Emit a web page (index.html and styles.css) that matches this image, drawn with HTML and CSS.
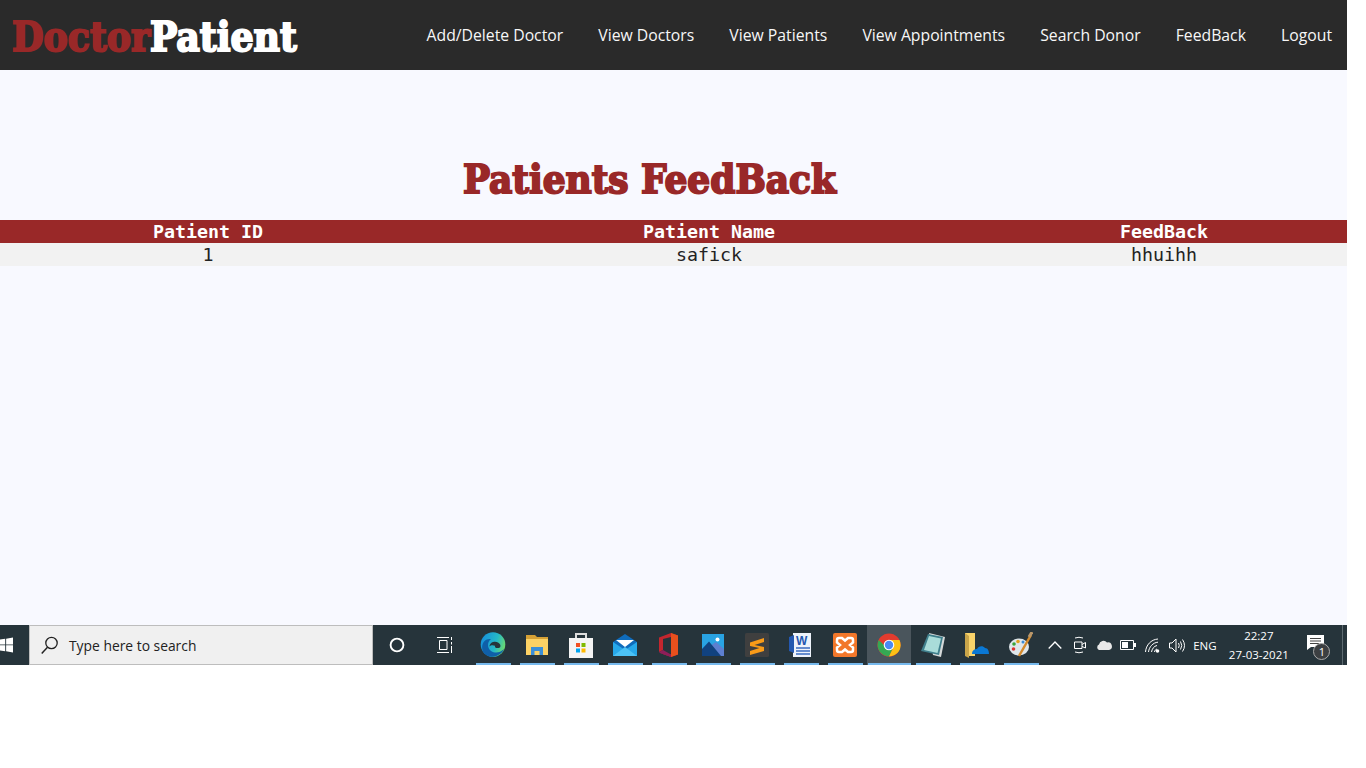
FILE: index.html
```html
<!DOCTYPE html>
<html lang="en">
<head>
<meta charset="utf-8">
<title>Patients FeedBack</title>
<link rel="stylesheet" href="styles.css">
</head>
<body>
<div class="screen">
  <header class="nav">
    <div class="logo"><span class="logo-a">Doctor</span><span class="logo-b">Patient</span></div>
    <nav class="links">
      <a>Add/Delete Doctor</a><a>View Doctors</a><a>View Patients</a><a>View Appointments</a><a>Search Donor</a><a>FeedBack</a><a>Logout</a>
    </nav>
  </header>
  <main class="main">
    <h1 class="title">Patients FeedBack</h1>
    <div class="row head"><div>Patient ID</div><div>Patient Name</div><div>FeedBack</div></div>
    <div class="row body-row"><div>1</div><div>safick</div><div>hhuihh</div></div>
  </main>
  <footer class="taskbar">
    <div class="start">
      <svg width="14" height="16" viewBox="0 0 14 16"><path fill="#fff" d="M0 2.2 5.6 1.4V7.4H0ZM6.6 1.2 14 0V7.4H6.6ZM0 8.4H5.6V14.6L0 13.8ZM6.6 8.4H14V16L6.6 14.8Z"/></svg>
    </div>
    <div class="search">
      <svg width="20" height="20" viewBox="0 0 20 20"><circle cx="11.5" cy="8" r="5.7" fill="none" stroke="#222" stroke-width="1.3"/><path d="M7.5 12.3 1.7 18.4" stroke="#222" stroke-width="1.5"/></svg>
      <span>Type here to search</span>
    </div>
    <div class="sys">
      <svg width="16" height="16" viewBox="0 0 16 16"><circle cx="8" cy="8" r="6.4" fill="none" stroke="#fff" stroke-width="1.9"/></svg>
    </div>
    <div class="sys sys-b">
      <svg width="18" height="16" viewBox="0 0 18 16"><path fill="none" stroke="#fff" d="M1 .5H13M1 15.5H13M3.5 3.5H11V12.5H3.5ZM15.5 0V3M15.5 5V7.5M15.5 9V16"/></svg>
    </div>
    <div class="apps">
      <div class="app on"><svg width="26" height="26" viewBox="0 0 26 26"><defs><linearGradient id="e1" x1="0" y1="0.3" x2="1" y2="0.6"><stop offset="0" stop-color="#1690dc"/><stop offset="0.6" stop-color="#25b8c8"/><stop offset="1" stop-color="#6fdc6a"/></linearGradient></defs><circle cx="13" cy="12.500" r="12.300" fill="url(#e1)"/><path fill="#0f5fa8" d="M3 20C0 12 5 6 11 7 7 10 7 16 11 19c4 2.500 9 2 13-2-3 8-16 11-21 3Z"/><path fill="#26343b" d="M9.500 14.500C10 10 15 9 18 10.500c3 1.500 3.500 5 .5 5.500-2.500.4-4-.5-3.500-2.300C13 12.800 10.500 13 9.500 14.500Z"/></svg></div>
      <div class="app on"><svg width="24" height="24" viewBox="0 0 24 24"><path fill="#d6a136" d="M1 2H10L12 4H23V8H1Z"/><path fill="#fcd265" d="M1 6H23V22H1Z"/><path fill="#3a8fd8" d="M6 14H18V22H14.500V18H9.500V22H6Z"/></svg></div>
      <div class="app"><svg width="24" height="26" viewBox="0 0 24 26"><path fill="none" stroke="#ddd" stroke-width="2" d="M7 6V2H17V6"/><path fill="#f4f4f4" d="M0 6H24V26H0Z"/><path fill="#f25022" d="M7 11H11V15H7Z"/><path fill="#7fba00" d="M12.500 11H16.500V15H12.500Z"/><path fill="#00a4ef" d="M7 16.500H11V20.500H7Z"/><path fill="#ffb900" d="M12.500 16.500H16.500V20.500H12.500Z"/></svg></div>
      <div class="app"><svg width="24" height="24" viewBox="0 0 24 24"><path fill="#0f6cbd" d="M12 1 24 9V11L12 18 0 11V9Z"/><path fill="#fff" d="M3 7H21L12 14Z"/><path fill="#27a8ea" d="M0 9 12 17 24 9V23H0Z"/><path fill="#4cc2f5" d="M0 23 12 14 24 23Z"/></svg></div>
      <div class="app"><svg width="20" height="24" viewBox="0 0 20 24"><path fill="#c4262e" d="M0 4.500 12 0 19 2.500V21.500L12 24 1 20 12 21.500V4L4 6V17L0 19Z"/><path fill="#e8501d" d="M12 0 19 2.500V21.500L12 24Z"/><path fill="#8e1e5a" d="M0 19 4 17 12 21.500V24L1 20Z"/></svg></div>
      <div class="app"><svg width="22" height="22" viewBox="0 0 22 22"><path fill="#29a3e3" d="M0 0H22V22H0Z"/><circle cx="15.500" cy="5.500" r="2" fill="#fff"/><path fill="#5d7fd0" d="M8 12 14 8 22 15V22H8Z"/><path fill="#11427f" d="M0 15 7 7.500 19 22H0Z"/></svg></div>
      <div class="app"><svg width="24" height="24" viewBox="0 0 24 24"><rect width="24" height="24" rx="1.500" fill="#3f3f3f"/><path fill="#f99b18" d="M5 9.500 19 5V9L9.500 12 19 14V18L5 22V18L14.500 15 5 13Z"/></svg></div>
      <div class="app"><svg width="24" height="24" viewBox="0 0 24 24"><path fill="#eef3fb" d="M4 0H22V24H4Z"/><path fill="#2458b0" d="M0 4 5 2V20L0 18Z"/><text class="word-w" x="7" y="12">W</text><path stroke="#3a6cc0" stroke-width="1.300" d="M7 15H21M7 18H21M7 21H21"/></svg></div>
      <div class="app"><svg width="24" height="24" viewBox="0 0 24 24"><rect width="24" height="24" rx="2" fill="#f2772a"/><path fill="none" stroke="#fff" stroke-width="2.500" d="M9 5H6A2 2 0 0 0 4 7V9.500L7 12 4 14.500V17A2 2 0 0 0 6 19H9L12 16.500 15 19H18A2 2 0 0 0 20 17V14.500L17 12 20 9.500V7A2 2 0 0 0 18 5H15L12 7.500Z"/></svg></div>
      <div class="app active"><svg width="24" height="24" viewBox="0 0 24 24"><circle cx="12" cy="12" r="11.500" fill="#e33b2e"/><path fill="#35a853" d="M1.700 7A11.500 11.500 0 0 0 12 23.500L17 13H8Z"/><path fill="#fbc116" d="M12 7H22.500A11.500 11.500 0 0 1 12 23.500L17 13Z"/><circle cx="12" cy="12" r="5.300" fill="#fff"/><circle cx="12" cy="12" r="4.200" fill="#4a8af4"/></svg></div>
      <div class="app"><svg width="24" height="24" viewBox="0 0 24 24"><path fill="#d5d9d9" d="M8 0 24 4 20 24 12 22Z"/><path fill="#3f7f8c" d="M7 1 22 4 18 22 0 18Z"/><path fill="#a9dcd9" d="M8 3 20 5.500 16.500 20 3 17Z"/></svg></div>
      <div class="app"><svg width="24" height="26" viewBox="0 0 24 26"><path fill="#f9d36a" d="M0 1H10V24H0Z"/><path fill="#c9a54a" d="M0 1 4 4V26L0 24Z"/><path fill="#0a78d4" d="M7 22C7 18 10 17 12 17 13 14 18 13 20 16 23 16 24 19 24 22Z"/></svg></div>
      <div class="app"><svg width="24" height="26" viewBox="0 0 24 26"><ellipse cx="10" cy="15" rx="10" ry="8.500" fill="#dfe6ea"/><circle cx="5" cy="12" r="1.800" fill="#3ba33b"/><circle cx="9" cy="9.500" r="1.800" fill="#e3a11f"/><circle cx="4.500" cy="17" r="1.800" fill="#d33"/><circle cx="14" cy="10" r="1.500" fill="#3b8ad3"/><path d="M10 24 22 3" stroke="#d48a2c" stroke-width="2.500"/><path d="M20 5 23 0" stroke="#b9976a" stroke-width="3"/></svg></div>
    </div>
    <div class="tray">
      <div class="ti"><svg width="14" height="8" viewBox="0 0 14 8"><path fill="none" stroke="#fff" stroke-width="1.300" d="M.7 7.500 7 1 13.300 7.500"/></svg></div>
      <div class="ti"><svg width="14" height="18" viewBox="0 0 14 18"><path fill="none" stroke="#fff" d="M2 2Q6 .5 10 2M2 16Q6 17.500 10 16M1.500 6H9V12.500H1.500ZM9 8.500 12.500 6.500V12L9 10.500"/></svg></div>
      <div class="ti"><svg width="16" height="10" viewBox="0 0 16 10"><path fill="#e8e8e8" d="M3 10A3 3 0 0 1 3 4.500 4.500 4.500 0 0 1 11 2.500 3.800 3.800 0 0 1 13 10Z"/></svg></div>
      <div class="ti"><svg width="16" height="10" viewBox="0 0 16 10"><path fill="none" stroke="#fff" d="M.5 .5H13.500V9.500H.5Z"/><path fill="#fff" d="M2 2H8V8H2ZM14 3H16V7H14Z"/></svg></div>
      <div class="ti"><svg width="15" height="15" viewBox="0 0 15 15"><path fill="none" stroke="#fff" d="M.5 14C1 7 6 1.500 13 1M3.500 14C4 9 8 4.500 13 4.200M6.500 14C7 11 9 8 12 7.500M9.500 14C9.700 12.500 10.500 11.500 12 11"/><circle cx="12.500" cy="13" r="1.800" fill="#fff"/></svg></div>
      <div class="ti"><svg width="17" height="15" viewBox="0 0 17 15"><path fill="none" stroke="#fff" d="M.5 5H3L7 1V14L3 10H.5ZM9.500 5Q11 7.500 9.500 10M11.500 3.500Q14 7.500 11.500 11.500M13.500 1.500Q17.500 7.500 13.500 13.500"/></svg></div>
    </div>
    <div class="lang">ENG</div>
    <div class="clock"><span>22:27</span><span>27-03-2021</span></div>
    <div class="notify">
      <svg width="18" height="15" viewBox="0 0 18 15"><path fill="#fff" d="M0 0H17V12H4L0 15Z"/><path stroke="#444" d="M3 3.500H14M3 6H14M3 8.500H12"/></svg>
      <span class="badge">1</span>
    </div>
    <div class="edge"></div>
  </footer>
</div>
</body>
</html>
```
FILE: styles.css
```css
* { box-sizing: border-box; }
html, body { margin: 0; padding: 0; background: #fff; }
.screen { width: 1347px; height: 768px; background: #fff; overflow: hidden; }
.nav { height: 70px; background: #2a2a2a; display: flex; align-items: center; justify-content: space-between; padding: 0 15px 0 12px; }
.logo { font-family: "DejaVu Serif Condensed", "DejaVu Serif", serif; font-stretch: condensed; font-weight: 700; font-size: 40.4px; line-height: 1; -webkit-text-stroke: 1.9px currentColor; white-space: nowrap; padding-top: 5px; }
.logo-a { color: #992828; }
.logo-b { color: #fff; }
.links { display: flex; gap: 35.1px; font-family: "Open Sans", sans-serif; font-size: 15.75px; color: #f7f7f7; }
.main { height: 555px; background: #f8f9ff; padding-top: 80px; }
.title { margin: 0 0 16px; height: 54px; line-height: 58px; padding-right: 48px; text-align: center; font-family: "DejaVu Serif Condensed", "DejaVu Serif", serif; font-stretch: condensed; font-weight: 700; font-size: 40px; color: #992828; -webkit-text-stroke: 1.9px #992828; }
.row { display: grid; grid-template-columns: 416px 586px 324px 21px; height: 23px; line-height: 23px; text-align: center; font-family: "DejaVu Sans Mono", monospace; font-size: 18.3px; }
.head { background: #992828; color: #fff; font-weight: 700; }
.body-row { background: #f2f2f2; color: #222; }
.taskbar { height: 40px; background: #26343b; display: flex; align-items: stretch; color: #fff; font-family: "Open Sans", sans-serif; }
.taskbar > * { flex: none; }
.start { width: 29px; display: flex; align-items: center; justify-content: flex-end; padding-right: 16px; }
.search { width: 344px; background: #f0f0f0; border: 1px solid #bdbdbd; display: flex; align-items: center; gap: 9px; padding-left: 10px; color: #222; font-size: 13.85px; }
.sys { width: 48px; display: flex; align-items: center; justify-content: center; }
.sys-b { width: 50px; padding-right: 2px; }
.apps { display: flex; }
.app { flex: none; width: 44px; display: flex; align-items: center; justify-content: center; position: relative; }
.app::after { content: ""; position: absolute; left: 5px; right: 4px; bottom: 0; height: 2px; background: #76b9ed; }
.app.active { background: #4a555c; }
.app.active::after { left: 1px; right: 0; }
.word-w { font-family: "Liberation Sans", sans-serif; font-size: 12px; font-weight: 700; fill: #2458b0; }
.tray { display: flex; }
.ti { flex: none; width: 24.4px; display: flex; align-items: center; justify-content: center; }
.lang { width: 31px; display: flex; align-items: center; justify-content: center; font-size: 11.5px; }
.clock { width: 77px; display: flex; flex-direction: column; align-items: center; justify-content: center; font-size: 11.5px; line-height: 19px; }
.notify { width: 38px; display: flex; align-items: center; justify-content: center; position: relative; padding-bottom: 5px; }
.badge { position: absolute; left: 16px; top: 18px; width: 17px; height: 17px; border-radius: 50%; background: #3c3f42; border: 1px solid #aaa; font-size: 11px; line-height: 15px; text-align: center; }
.edge { width: 1px; margin-left: 7px; background: #5d6a70; }
```
